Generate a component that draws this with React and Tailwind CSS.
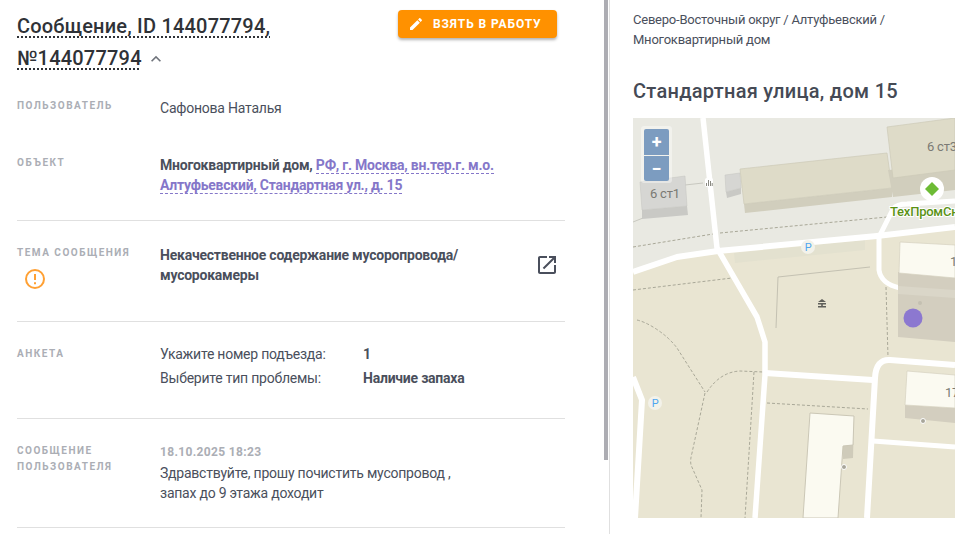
const font = { fontFamily: 'Roboto, sans-serif' };

function Label({ children }) {
  return <div className="w-[143px] shrink-0 text-[10px] leading-[16px] font-bold uppercase tracking-[1.5px] text-[#abaeb5]">{children}</div>;
}

function MapView() {
  return (
    <svg viewBox="633 118 322 400" className="block w-[322px] h-[400px]">
      <rect x="633" y="118" width="322" height="400" fill="#e9e5d2" />
      <polygon points="633,118 955,118 955,225 877,234 718,249 677,255 633,270" fill="#e9e9e2" />
      <polygon points="734,253 865,240 865,250 735,263" fill="#e3e1cf" />

      {/* dashed paths */}
      <g fill="none" stroke="#a9a898" strokeWidth="1" strokeDasharray="3 2">
        <path d="M633 247L713 234M720 233L887 217" />
        <path d="M633 290L732 278" />
        <path d="M886 287L888 357" />
        <path d="M637 320Q645 322 653 327Q668 336 677 348L705 392" />
        <path d="M707 392Q720 372 740 371L763 372" />
        <path d="M705 393L692 453Q690 460 691 465L702 490L701 518" />
        <path d="M754 372L745 518" />
        <path d="M767 403L868 409" />
      </g>
      <path d="M776 328L778 277L870 267" fill="none" stroke="#c4c1b2" strokeWidth="1" />
      <path d="M633 222L643 218M685 185L703 183" fill="none" stroke="#c8c8c0" strokeWidth="1" />

      {/* roads */}
      <g fill="none" stroke="#fff" strokeWidth="6" strokeLinejoin="round">
        <path d="M633 272L677 257L718 251L877 236L955 227" />
        <path d="M703 118L717 248L757 317L765 342L765 375L755 518" strokeWidth="5.5" />
        <path d="M765 373L873 380" />
        <path d="M867 518L875 378Q876 359 890 360L955 365" />
        <path d="M873 441L955 447" strokeWidth="5" />
        <path d="M633 377L642 400L635 518" />
        <path d="M879 237L893 209Q897 204 907 204L955 201" strokeWidth="5" />
        <path d="M879 237L879 270Q881 284 900 288" strokeWidth="5" />
      </g>

      {/* buildings */}
      <polygon points="642,210 687,206 688,215 642,219" fill="#c9c9c5" />
      <polygon points="640,182 685,176 687,206 642,210" fill="#d6d6d3" stroke="#c4c4c0" strokeWidth="0.5" />
      <polygon points="726,192 741,188 741,194 727,198" fill="#c9c9c5" />
      <polygon points="725,175 740,173 741,188 726,192" fill="#d6d6d3" stroke="#c4c4c0" strokeWidth="0.5" />
      <polygon points="744,204 892,188 892,197 745,213" fill="#d1cebd" />
      <polygon points="740,169 887,153 892,188 744,204" fill="#dedbc8" stroke="#cdcab8" strokeWidth="0.7" />
      <polygon points="888,170 955,165 955,190 893,197" fill="#d1cebd" />
      <polygon points="887,127 955,118 955,170 893,178" fill="#dedbc8" stroke="#cdcab8" strokeWidth="0.7" />
      <polygon points="898,272 955,276 955,342 898,337" fill="#d3cebf" />
      <polygon points="898,286 955,290 955,298 898,294" fill="#dad6c8" />
      <polygon points="900,242 955,245 955,278 899,273" fill="#fbfaf1" stroke="#d5d1c0" strokeWidth="0.7" />
      <polygon points="905,405 955,408 955,423 905,418" fill="#d3cebf" />
      <polygon points="907,371 955,375 955,408 905,405" fill="#fbfaf1" stroke="#d5d1c0" strokeWidth="0.7" />
      <polygon points="854,416 853,458 843,459 843,446" fill="#cfcbba" />
      <polygon points="810,413 854,416 853,445 843,446 838,518 803,518" fill="#fbfaf1" stroke="#cbc7b6" strokeWidth="1" />

      <circle cx="844" cy="467" r="2.5" fill="#a8a69a" stroke="#fff" strokeWidth="1" />
      <circle cx="923" cy="421" r="2.5" fill="#a8a69a" stroke="#fff" strokeWidth="1" />
      <circle cx="920" cy="303" r="2" fill="#c4c0b2" />

      {/* POI */}
      <circle cx="808" cy="247" r="7" fill="#f3f2ea" />
      <text x="808" y="251" textAnchor="middle" fontSize="11" fill="#4fa6f0" style={font}>P</text>
      <circle cx="655" cy="403" r="7" fill="#f3f2ea" />
      <text x="655" y="407" textAnchor="middle" fontSize="11" fill="#4fa6f0" style={font}>P</text>
      <path d="M822 299l4 3h-8zM818 303h8v1.5h-3.2v1.5H826v1.5h-8V306h3.2v-1.5H818z" fill="#5f5f5a" />
      <rect x="705" y="178" width="8" height="9" rx="2" fill="#fff" />
      <path d="M706.5 186v-3M708.5 186v-6M710.5 186v-5M712.2 186v-3" stroke="#8a8a82" strokeWidth="1" />

      {/* labels */}
      <g fontSize="13" fill="#7a7a74" style={font}>
        <text x="650" y="198">6 ст1</text>
        <text x="927" y="151">6 ст3</text>
        <text x="950" y="266">1</text>
        <text x="945" y="397">17</text>
      </g>

      {/* marker */}
      <circle cx="913" cy="318" r="9.5" fill="#8c78d0" />
      <circle cx="932" cy="189" r="12" fill="#fff" />
      <polygon points="932,182 939,189 932,196 925,189" fill="#6dbb35" />
      <text x="890" y="216" fontSize="13" fontWeight="500" fill="#5a9216" stroke="#fff" strokeWidth="2" paintOrder="stroke" style={font}>ТехПромСнаб</text>
    </svg>
  );
}

export default function App() {
  return (
    <div className="relative flex h-[534px] w-[955px] overflow-hidden bg-white text-[14px] leading-[20px] tracking-[-0.23px] text-[#4a4f5c]" style={font}>
      {/* Left column */}
      <div className="w-[609px] shrink-0 pl-[17px] pr-[44px] pt-[10px]">
        <div className="flex justify-between items-start h-[66px]">
          <h1 className="w-[300px] text-[20px] leading-[32px] font-medium tracking-[0.2px] text-[#2f3237]">
            <span className="underline decoration-dotted decoration-[#2f3237] underline-offset-[3px]">Сообщение, ID 144077794, №144077794</span>
            <svg viewBox="0 0 24 24" className="inline-block w-[20px] h-[20px] ml-[4px] align-[-4px]" fill="#70747c">
              <path d="M7.41 15.41 12 10.83l4.59 4.58L18 14l-6-6-6 6z" />
            </svg>
          </h1>
          <button className="flex items-center w-[159px] h-[28px] mr-[8px] pl-[10px] rounded-[4px] bg-[#ff9100] text-white text-[12px] font-bold tracking-[0.9px] shadow-[0_2px_3px_rgba(0,0,0,0.3)]">
            <svg viewBox="0 0 24 24" className="w-[16px] h-[16px] mr-[9px]" fill="#fff">
              <path d="M3 17.25V21h3.75L17.81 9.94l-3.75-3.75L3 17.25zM20.71 7.04c.39-.39.39-1.02 0-1.41l-2.34-2.34c-.39-.39-1.02-.39-1.41 0l-1.83 1.83 3.75 3.75 1.83-1.83z" />
            </svg>
            ВЗЯТЬ В РАБОТУ
          </button>
        </div>

        <div className="flex pt-[22px] h-[57px]">
          <Label>Пользователь</Label>
          <div>Сафонова Наталья</div>
        </div>

        <div className="flex pt-[22px] h-[88px] border-b border-[#e0e0e0]">
          <Label>Объект</Label>
          <div className="font-bold w-[350px]">
            Многоквартирный дом,{' '}
            <span className="text-[#8577c9] border-b border-dashed border-[#8577c9]">РФ, г. Москва, вн.тер.г. м.о.</span>{' '}
            <span className="text-[#8577c9] border-b border-dashed border-[#8577c9]">Алтуфьевский, Стандартная ул., д. 15</span>
          </div>
        </div>

        <div className="flex pt-[24px] h-[101px] border-b border-[#e0e0e0]">
          <div className="w-[143px] shrink-0">
            <Label>Тема сообщения</Label>
            <svg viewBox="0 0 20 20" className="w-[20px] h-[20px] ml-[8px] mt-[8px]" fill="none">
              <circle cx="10" cy="10" r="9" stroke="#ffa033" strokeWidth="2" />
              <path d="M10 5v6M10 13.2v2" stroke="#ffa033" strokeWidth="2" />
            </svg>
          </div>
          <div className="font-bold w-[330px]">Некачественное содержание мусоропровода/ мусорокамеры</div>
          <svg viewBox="0 0 24 24" className="w-[24px] h-[24px] ml-auto mt-[8px] mr-[6px]" fill="#4a4f5c">
            <path d="M19 19H5V5h7V3H5c-1.11 0-2 .9-2 2v14c0 1.1.89 2 2 2h14c1.1 0 2-.9 2-2v-7h-2v7zM14 3v2h3.59l-9.83 9.83 1.41 1.41L19 6.41V10h2V3h-7z" />
          </svg>
        </div>

        <div className="flex pt-[24px] h-[97px] border-b border-[#e0e0e0]">
          <Label>Анкета</Label>
          <div className="grid grid-cols-[203px_auto] auto-rows-[24px] -mt-[2px]">
            <div>Укажите номер подъезда:</div>
            <div className="font-bold">1</div>
            <div>Выберите тип проблемы:</div>
            <div className="font-bold">Наличие запаха</div>
          </div>
        </div>

        <div className="flex pt-[24px] h-[109px] border-b border-[#e0e0e0]">
          <Label>Сообщение пользователя</Label>
          <div className="w-[310px] -mt-[1px]">
            <div className="text-[12px] font-bold text-[#abaeb5] tracking-[0.35px]">18.10.2025 18:23</div>
            <div className="mt-[1px]">Здравствуйте, прошу почистить мусопровод ,<br />запах до 9 этажа доходит</div>
          </div>
        </div>
      </div>

      {/* scrollbar */}
      <div className="absolute left-[604px] top-0 w-[4px] h-[460px] bg-[#adadb3]" />

      {/* Right column */}
      <div className="flex-1 border-l border-[#e0e0e0] pl-[23px] pt-[10px] min-w-0">
        <div className="text-[13px] leading-[20px] w-[290px]">Северо-Восточный округ / Алтуфьевский / Многоквартирный дом</div>
        <h2 className="mt-[29px] h-[39px] text-[20px] leading-[24px] font-medium tracking-[0.28px] text-[#454a55]">Стандартная улица, дом 15</h2>
        <div className="relative w-[322px] h-[400px] overflow-hidden">
          <MapView />
          <div className="absolute left-[8px] top-[8px] w-[31px] h-[57px] p-[3px] rounded-[3px] bg-white/40">
            <div className="flex h-[26px] items-center justify-center rounded-t-[2px] bg-[#7c9cc0] text-white text-[18px] font-bold">+</div>
            <div className="flex h-[25px] mt-[1px] items-center justify-center rounded-b-[2px] bg-[#7c9cc0] text-white text-[18px] font-bold">−</div>
          </div>
        </div>
      </div>
    </div>
  );
}
